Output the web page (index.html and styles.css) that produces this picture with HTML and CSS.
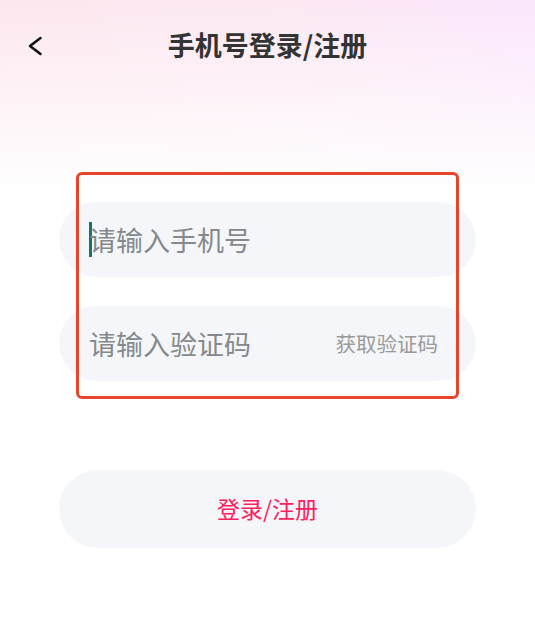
FILE: index.html
```html
<!DOCTYPE html>
<html lang="zh-CN">
<head>
<meta charset="utf-8">
<title>手机号登录/注册</title>
<link rel="stylesheet" href="styles.css">
</head>
<body>
<div class="page">
  <header class="header">
    <button class="back" aria-label="返回">
      <svg width="18" height="22" viewBox="0 0 18 22"><path d="M13.5 3 L3 11 L13.5 19" fill="none" stroke="#111" stroke-width="2.6" stroke-linecap="round" stroke-linejoin="round"/></svg>
    </button>
    <h1 class="title">手机号登录/注册</h1>
    <span class="spacer"></span>
  </header>

  <main class="form">
    <div class="fields">
      <div class="field">
        <span class="caret"></span>
        <span class="placeholder">请输入手机号</span>
      </div>
      <div class="field">
        <span class="placeholder">请输入验证码</span>
        <span class="get-code">获取验证码</span>
      </div>
      <div class="highlight"></div>
    </div>
    <button class="submit">登录/注册</button>
  </main>
</div>
</body>
</html>
```

FILE: styles.css
```css
* { box-sizing: border-box; }
html, body { margin: 0; padding: 0; }
body {
  font-family: "Noto Sans CJK SC", "Noto Sans", sans-serif;
  background: #ffffff;
}
.page {
  min-height: 639px;
  width: 535px;
  background: linear-gradient(180deg, rgba(255,255,255,0) 0px, #ffffff 195px),
              linear-gradient(90deg, #fde7ee 0%, #fce8f3 55%, #fbe6fc 100%);
  background-repeat: no-repeat;
  background-size: 100% 200px, 100% 200px;
}
.header {
  height: 88px;
  display: grid;
  grid-template-columns: 1fr auto 1fr;
  align-items: center;
  padding: 0 0 0 27px;
}
.back {
  justify-self: start;
  border: 0;
  background: none;
  padding: 0;
  width: 20px;
  height: 24px;
  display: flex;
  align-items: center;
  margin-top: 4px;
}
.title {
  margin: 0 27px 0 0;
  font-size: 27px;
  font-weight: 700;
  color: #333333;
  line-height: 1;
}
.form {
  padding: 114px 59px 0;
  display: flex;
  flex-direction: column;
}
.fields {
  position: relative;
  display: flex;
  flex-direction: column;
  gap: 29px;
}
.field {
  height: 75px;
  border-radius: 38px;
  background: #f5f6fa;
  display: flex;
  align-items: center;
  padding: 0 38px 0 30px;
}
.caret {
  width: 3px;
  height: 35px;
  background: #0e7a66;
  margin-right: -3px;
  flex: none;
}
.placeholder {
  font-size: 27px;
  color: #85898c;
  flex: 1;
  line-height: 1;
}
.get-code {
  font-size: 20.5px;
  color: #9a9a9a;
  line-height: 1;
}
.highlight {
  position: absolute;
  left: 17px;
  top: -30px;
  width: 383px;
  height: 227px;
  border: 3px solid #e8432b;
  border-radius: 6px;
  pointer-events: none;
}
.submit {
  margin-top: 89px;
  height: 78px;
  border: 0;
  border-radius: 39px;
  background: #f5f6fa;
  font-family: inherit;
  font-size: 23px;
  color: #ff215c;
  padding: 0 0 3px;
}
```
